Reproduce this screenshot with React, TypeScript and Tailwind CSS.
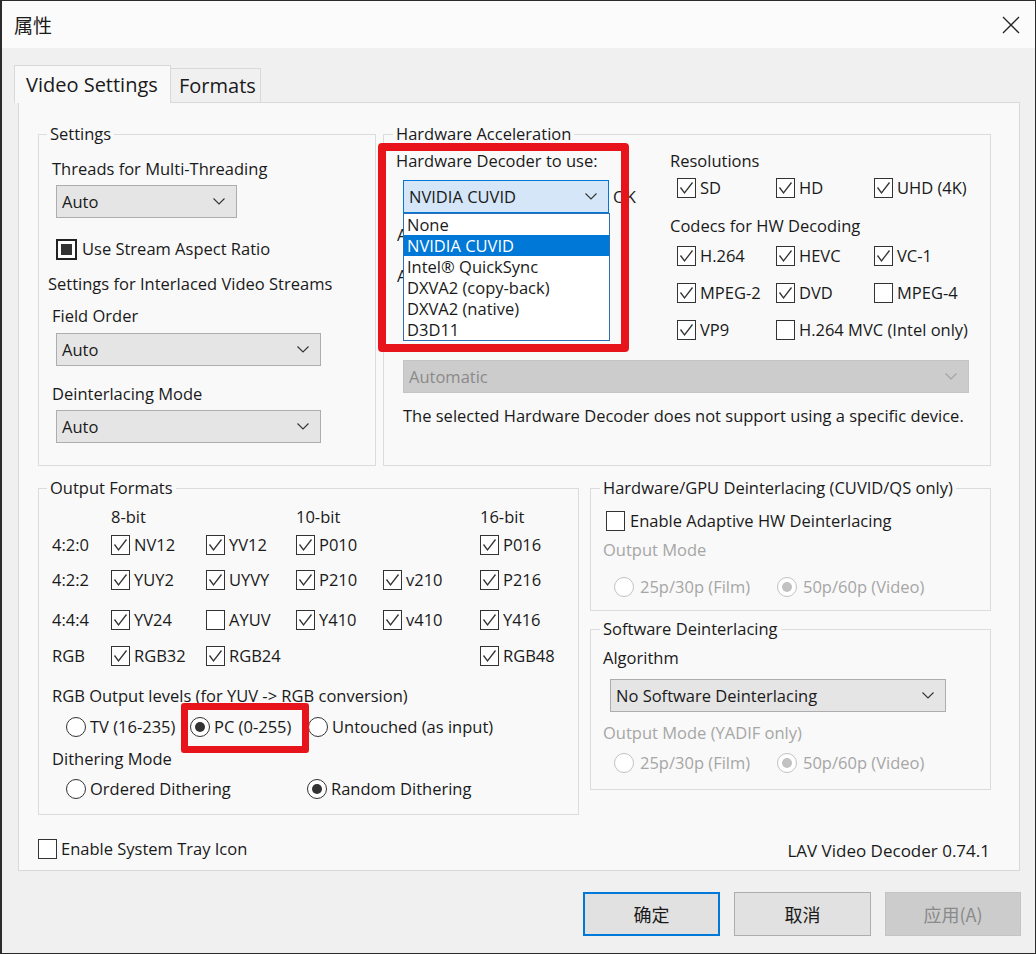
import React from 'react';

function Chevron({ disabled = false }: { disabled?: boolean }) {
  return (
    <svg width="12" height="7" viewBox="0 0 12 7" className="shrink-0">
      <path d="M0.5 0.5 L6 6 L11.5 0.5" fill="none" stroke={disabled ? '#a3a3a3' : '#333'} strokeWidth="1.1" />
    </svg>
  );
}

function Combo({ text, className = '', disabled = false, focused = false }: { text: string; className?: string; disabled?: boolean; focused?: boolean }) {
  const look = disabled
    ? 'border-[#c4c4c4] bg-[#cccccc] text-[#8a8a8a]'
    : focused
      ? 'border-[#0078d7] bg-[#d4e6f7]'
      : 'border-[#adadad] bg-[#e5e5e5]';
  return (
    <div className={`flex h-[33px] items-center justify-between border pl-[5px] pr-[11px] ${look} ${className}`}>
      <span>{text}</span>
      <Chevron disabled={disabled} />
    </div>
  );
}

function Box({ on = true }: { on?: boolean }) {
  return (
    <span className="flex h-[20px] w-[19px] shrink-0 items-center justify-center border border-[#333] bg-white">
      {on && (
        <svg width="15" height="14" viewBox="0 0 15 14">
          <path d="M1.5 6.5 L5.5 12 L13.5 1.5" fill="none" stroke="#333" strokeWidth="1.3" />
        </svg>
      )}
    </span>
  );
}

function Check({ label, on = true, className = '' }: { label: string; on?: boolean; className?: string }) {
  return (
    <div className={`flex h-[20px] items-center gap-[4px] ${className}`}>
      <Box on={on} />
      <span className="whitespace-nowrap">{label}</span>
    </div>
  );
}

function Radio({ label, on = false, disabled = false, className = '' }: { label: string; on?: boolean; disabled?: boolean; className?: string }) {
  return (
    <div className={`flex h-[20px] items-center gap-[4px] ${className}`}>
      <span
        className={`flex h-[20px] w-[20px] shrink-0 items-center justify-center rounded-full border bg-white ${disabled ? 'border-[#c2c2c2]' : 'border-[#333]'}`}
      >
        {on && <span className={`h-[10px] w-[10px] rounded-full ${disabled ? 'bg-[#c2c2c2]' : 'bg-[#333]'}`} />}
      </span>
      <span className={`whitespace-nowrap ${disabled ? 'text-[#a6a6a6]' : ''}`}>{label}</span>
    </div>
  );
}

function Group({ title, className = '', legendClass = 'ml-[8px]', children }: { title: string; className?: string; legendClass?: string; children: React.ReactNode }) {
  return (
    <fieldset className={`relative border border-[#dcdcdc] p-0 ${className}`}>
      <legend className={`px-[3px] ${legendClass}`}>{title}</legend>
      {children}
    </fieldset>
  );
}

const decoders = ['None', 'NVIDIA CUVID', 'Intel® QuickSync', 'DXVA2 (copy-back)', 'DXVA2 (native)', 'D3D11'];

export default function App() {
  return (
    <div className="h-[954px] w-[1036px] overflow-hidden border border-l-2 border-[#2b2b2b] bg-[#f0f0f0] text-[16.5px] leading-[20px] text-[#1a1a1a] [font-family:'Open_Sans',sans-serif]">
      {/* title bar */}
      <div className="flex h-[47px] items-center justify-between bg-[#fbfbfb] pl-[12px] pr-[15px]">
        <span className="text-[19px] [font-family:'Noto_Sans_CJK_SC',sans-serif]">属性</span>
        <svg width="18" height="18" viewBox="0 0 18 18">
          <path d="M1 1 L17 17 M17 1 L1 17" stroke="#222" strokeWidth="1.3" />
        </svg>
      </div>

      {/* tabs */}
      <div className="mt-[17px] flex h-[37px] items-end pl-[12px]">
        <div className="relative z-10 -mb-[1px] flex h-[38px] w-[157px] items-center border border-b-0 border-[#d9d9d9] bg-[#f9f9f9] pl-[11px] text-[20px]">
          Video Settings
        </div>
        <div className="flex h-[34px] w-[90px] items-center border border-b-0 border-l-0 border-[#d9d9d9] bg-[#f0f0f0] pl-[8px] text-[20px]">
          Formats
        </div>
      </div>

      {/* tab page */}
      <div className="ml-[16px] h-[769px] w-[1002px] border border-[#d9d9d9] bg-[#f9f9f9] pl-[19px] pt-[21px]">
        {/* row 1 */}
        <div className="flex gap-[7px]">
          <Group title="Settings" className="h-[342px] w-[338px]">
            <div className="flex flex-col items-start">
              <span className="ml-[13px] mt-[15px]">Threads for Multi-Threading</span>
              <Combo text="Auto" className="ml-[17px] mt-[6px] w-[181px]" />
              <div className="ml-[17px] mt-[21px] flex h-[20px] items-center gap-[5px]">
                <span className="flex h-[21px] w-[21px] items-center justify-center border-2 border-[#222] bg-white">
                  <span className="h-[11px] w-[11px] bg-[#333]" />
                </span>
                <span>Use Stream Aspect Ratio</span>
              </div>
              <span className="ml-[9px] mt-[15px]">Settings for Interlaced Video Streams</span>
              <span className="ml-[13px] mt-[12px]">Field Order</span>
              <Combo text="Auto" className="ml-[17px] mt-[7px] w-[265px]" />
              <span className="ml-[13px] mt-[18px]">Deinterlacing Mode</span>
              <Combo text="Auto" className="ml-[17px] mt-[6px] w-[265px]" />
            </div>
          </Group>

          <Group title="Hardware Acceleration" className="h-[342px] w-[608px]" legendClass="ml-[9px]">
            <div className="flex">
              <div className="relative w-[286px]">
                <div className="ml-[12px] mt-[7px]">Hardware Decoder to use:</div>
                <div className="ml-[19px] mt-[9px] flex items-center gap-[4px]">
                  <div className="relative">
                    <Combo text="NVIDIA CUVID" focused className="w-[206px]" />
                    <div className="absolute left-0 top-[33px] z-10 w-[207px] border border-[#2f6fb8] bg-white">
                      {decoders.map((d) => (
                        <div
                          key={d}
                          className={`h-[21px] pl-[3px] leading-[21px] ${d === 'NVIDIA CUVID' ? 'bg-[#0078d7] text-white' : ''}`}
                        >
                          {d}
                        </div>
                      ))}
                    </div>
                  </div>
                  <span>OK</span>
                </div>
                {/* labels hidden behind the open list: only their first letter peeks out */}
                <div className="ml-[13px] mt-[12px] w-[6px] overflow-hidden">A</div>
                <div className="ml-[13px] mt-[21px] w-[6px] overflow-hidden">A</div>
                {/* annotation */}
                <div className="absolute left-[-6px] top-[-1px] z-20 h-[209px] w-[251px] rounded-[4px] border-[8px] border-[#e8141b]" />
              </div>
              <div className="flex-1">
                <div className="mt-[7px]">Resolutions</div>
                <div className="ml-[7px] mt-[7px] grid grid-cols-[99px_98px_auto]">
                  <Check label="SD" />
                  <Check label="HD" />
                  <Check label="UHD (4K)" />
                </div>
                <div className="mt-[18px]">Codecs for HW Decoding</div>
                <div className="ml-[7px] mt-[10px] grid grid-cols-[99px_98px_auto] gap-y-[17px]">
                  <Check label="H.264" />
                  <Check label="HEVC" />
                  <Check label="VC-1" />
                  <Check label="MPEG-2" />
                  <Check label="DVD" />
                  <Check label="MPEG-4" on={false} />
                  <Check label="VP9" />
                  <Check label="H.264 MVC (Intel only)" on={false} className="col-span-2" />
                </div>
              </div>
            </div>
            <Combo text="Automatic" disabled className="ml-[19px] mt-[20px] w-[566px]" />
            <div className="ml-[19px] mt-[13px]">The selected Hardware Decoder does not support using a specific device.</div>
          </Group>
        </div>

        {/* row 2 */}
        <div className="mt-[12px] flex gap-[11px]">
          <Group title="Output Formats" className="h-[337px] w-[541px]">
            <div className="ml-[13px]">
              <div className="mt-[9px] grid grid-cols-[59px_95px_90px_87px_97px_auto]">
                <span />
                <span>8-bit</span>
                <span />
                <span>10-bit</span>
                <span />
                <span>16-bit</span>
              </div>
              <div className="mt-[8px] grid grid-cols-[59px_95px_90px_87px_97px_auto]">
                <span>4:2:0</span>
                <Check label="NV12" />
                <Check label="YV12" />
                <Check label="P010" />
                <span />
                <Check label="P016" />
              </div>
              <div className="mt-[15px] grid grid-cols-[59px_95px_90px_87px_97px_auto]">
                <span>4:2:2</span>
                <Check label="YUY2" />
                <Check label="UYVY" />
                <Check label="P210" />
                <Check label="v210" />
                <Check label="P216" />
              </div>
              <div className="mt-[20px] grid grid-cols-[59px_95px_90px_87px_97px_auto]">
                <span>4:4:4</span>
                <Check label="YV24" />
                <Check label="AYUV" on={false} />
                <Check label="Y410" />
                <Check label="v410" />
                <Check label="Y416" />
              </div>
              <div className="mt-[16px] grid grid-cols-[59px_95px_90px_87px_97px_auto]">
                <span>RGB</span>
                <Check label="RGB32" />
                <Check label="RGB24" />
                <span />
                <span />
                <Check label="RGB48" />
              </div>
              <div className="mt-[20px]">RGB Output levels (for YUV -&gt; RGB conversion)</div>
              <div className="ml-[14px] mt-[11px] flex">
                <Radio label="TV (16-235)" className="w-[124px]" />
                <div className="relative w-[118px]">
                  <Radio label="PC (0-255)" on />
                  <div className="absolute left-[-9px] top-[-14px] h-[50px] w-[128px] rounded-[3px] border-[7px] border-[#e8141b]" />
                </div>
                <Radio label="Untouched (as input)" />
              </div>
              <div className="mt-[12px]">Dithering Mode</div>
              <div className="ml-[14px] mt-[10px] flex">
                <Radio label="Ordered Dithering" className="w-[241px]" />
                <Radio label="Random Dithering" on />
              </div>
            </div>
          </Group>

          <div className="flex w-[401px] flex-col gap-[8px]">
            <Group title="Hardware/GPU Deinterlacing (CUVID/QS only)" className="h-[133px]" legendClass="ml-[9px]">
              <Check label="Enable Adaptive HW Deinterlacing" on={false} className="ml-[15px] mt-[13px] gap-[5px]" />
              <div className="ml-[12px] mt-[9px] text-[#a6a6a6]">Output Mode</div>
              <div className="ml-[23px] mt-[17px] flex">
                <Radio label="25p/30p (Film)" disabled className="w-[163px] gap-[6px]" />
                <Radio label="50p/60p (Video)" disabled on className="gap-[6px]" />
              </div>
            </Group>
            <Group title="Software Deinterlacing" className="h-[171px]" legendClass="ml-[9px]">
              <div className="ml-[12px] mt-[9px]">Algorithm</div>
              <Combo text="No Software Deinterlacing" className="ml-[19px] mt-[11px] w-[336px]" />
              <div className="ml-[12px] mt-[11px] text-[#a6a6a6]">Output Mode (YADIF only)</div>
              <div className="ml-[23px] mt-[10px] flex">
                <Radio label="25p/30p (Film)" disabled className="w-[163px] gap-[6px]" />
                <Radio label="50p/60p (Video)" disabled on className="gap-[6px]" />
              </div>
            </Group>
          </div>
        </div>

        {/* row 3 */}
        <div className="mt-[21px] flex w-[953px] items-center justify-between">
          <Check label="Enable System Tray Icon" on={false} />
          <span className="mt-[5px] pr-[1px] text-[17px]">LAV Video Decoder 0.74.1</span>
        </div>
      </div>

      {/* buttons */}
      <div className="mt-[21px] flex justify-end gap-[14px] pr-[14px] text-[18px] [font-family:'Noto_Sans_CJK_SC',sans-serif]">
        <button className="h-[44px] w-[137px] border-2 border-[#0078d7] bg-[#e1e1e1]">确定</button>
        <button className="h-[44px] w-[137px] border border-[#adadad] bg-[#e1e1e1]">取消</button>
        <button className="h-[44px] w-[136px] border border-[#c4c4c4] bg-[#cccccc] text-[#8a8a8a]">应用(A)</button>
      </div>
    </div>
  );
}
